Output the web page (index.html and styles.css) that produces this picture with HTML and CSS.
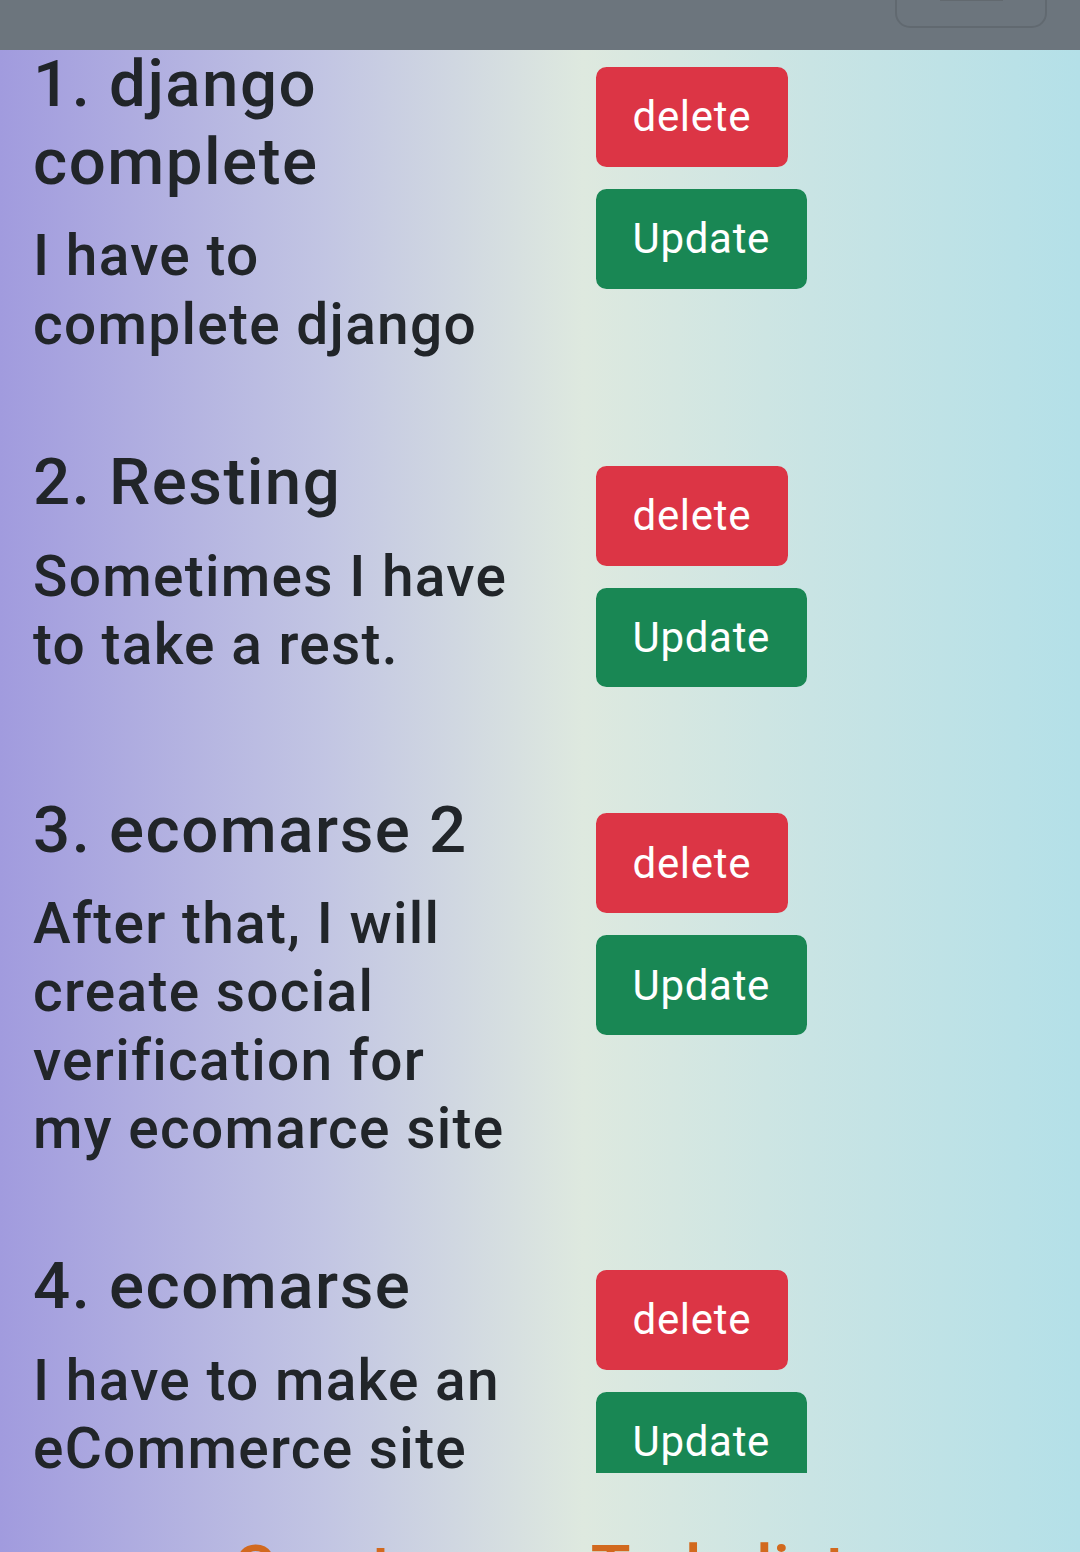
FILE: index.html
```html
<!DOCTYPE html>
<html lang="en">
<head>
<meta charset="utf-8">
<title>Todo list</title>
<link rel="stylesheet" href="styles.css">
</head>
<body>
<nav class="navbar">
  <button class="toggler" type="button" aria-label="Toggle navigation"><span class="toggler-bar"></span></button>
</nav>
<main class="page">
  <div class="list">
    <div class="items">
      <div class="item">
        <div class="text">
          <h2 class="title">1. django complete</h2>
          <p class="desc">I have to complete django</p>
        </div>
        <div class="actions">
          <button class="btn btn-danger">delete</button>
          <button class="btn btn-success">Update</button>
        </div>
      </div>
      <div class="item">
        <div class="text">
          <h2 class="title">2. Resting</h2>
          <p class="desc">Sometimes I have to take a rest.</p>
        </div>
        <div class="actions">
          <button class="btn btn-danger">delete</button>
          <button class="btn btn-success">Update</button>
        </div>
      </div>
      <div class="item">
        <div class="text">
          <h2 class="title">3. ecomarse 2</h2>
          <p class="desc">After that, I will create social verification for my ecomarce site</p>
        </div>
        <div class="actions">
          <button class="btn btn-danger">delete</button>
          <button class="btn btn-success">Update</button>
        </div>
      </div>
      <div class="item">
        <div class="text">
          <h2 class="title">4. ecomarse</h2>
          <p class="desc">I have to make an eCommerce site</p>
        </div>
        <div class="actions">
          <button class="btn btn-danger">delete</button>
          <button class="btn btn-success">Update</button>
        </div>
      </div>
    </div>
  </div>
  <h2 class="section-title">Create your Todo list</h2>
</main>
</body>
</html>
```
FILE: styles.css
```css
* { box-sizing: border-box; }

html, body {
  margin: 0;
  padding: 0;
}

body {
  width: 1080px;
  min-height: 1552px;
  font-family: Roboto, "Noto Sans", "Liberation Sans", sans-serif;
  color: #212529;
  background: linear-gradient(to right, #a19bde 0%, #c2c5e3 30%, #dee9df 54%, #c9e4e4 75%, #b4e0e8 100%);
  overflow: hidden;
}

.navbar {
  height: 50px;
  background: #6c757d;
  display: flex;
  justify-content: flex-end;
  align-items: flex-start;
  padding-right: 33px;
  overflow: hidden;
}

.toggler {
  width: 152px;
  height: 110px;
  margin-top: -82px;
  background: transparent;
  border: 2.6px solid rgba(0, 0, 0, 0.1);
  border-radius: 15px;
  display: flex;
  flex-direction: column;
  justify-content: flex-end;
  align-items: center;
  padding: 0 0 25px 0;
}

.toggler-bar {
  display: block;
  width: 63px;
  height: 2px;
  background: #62696f;
}

.page {
  display: flex;
  flex-direction: column;
}

.list {
  height: 1423px;
  overflow: hidden;
}

.items {
  margin-top: -5.5px;
  display: flex;
  flex-direction: column;
}

.item {
  display: flex;
  align-items: flex-start;
  margin-bottom: 63.5px;
}

.text {
  width: 540px;
  padding: 0 31.5px 0 33px;
  flex: none;
}

.title {
  font-size: 65.4px;
  line-height: 1.2;
  font-weight: 500;
  letter-spacing: 1.5px;
  margin: 0 0 21px 0;
}

.desc {
  font-size: 56.8px;
  line-height: 1.2;
  font-weight: 500;
  letter-spacing: 1.3px;
  margin: 0 0 21px 0;
}

.actions {
  display: flex;
  flex-direction: column;
  align-items: flex-start;
  gap: 22px;
  padding: 22.5px 0 40px 56px;
}

.btn {
  font-family: Roboto, "Noto Sans", "Liberation Sans", sans-serif;
  font-size: 42px;
  font-weight: 400;
  line-height: 63px;
  letter-spacing: 0.7px;
  color: #fff;
  padding: 16.4px 34.5px;
  border-width: 2.6px;
  border-style: solid;
  border-radius: 10.5px;
  cursor: pointer;
}

.btn-danger {
  background: #dc3545;
  border-color: #dc3545;
}

.btn-success {
  background: #198754;
  border-color: #198754;
}

.section-title {
  margin: 57px 0 0 0;
  text-align: center;
  font-size: 65.4px;
  line-height: 1.2;
  font-weight: 500;
  letter-spacing: 0.5px;
  color: #d2691e;
}
```
